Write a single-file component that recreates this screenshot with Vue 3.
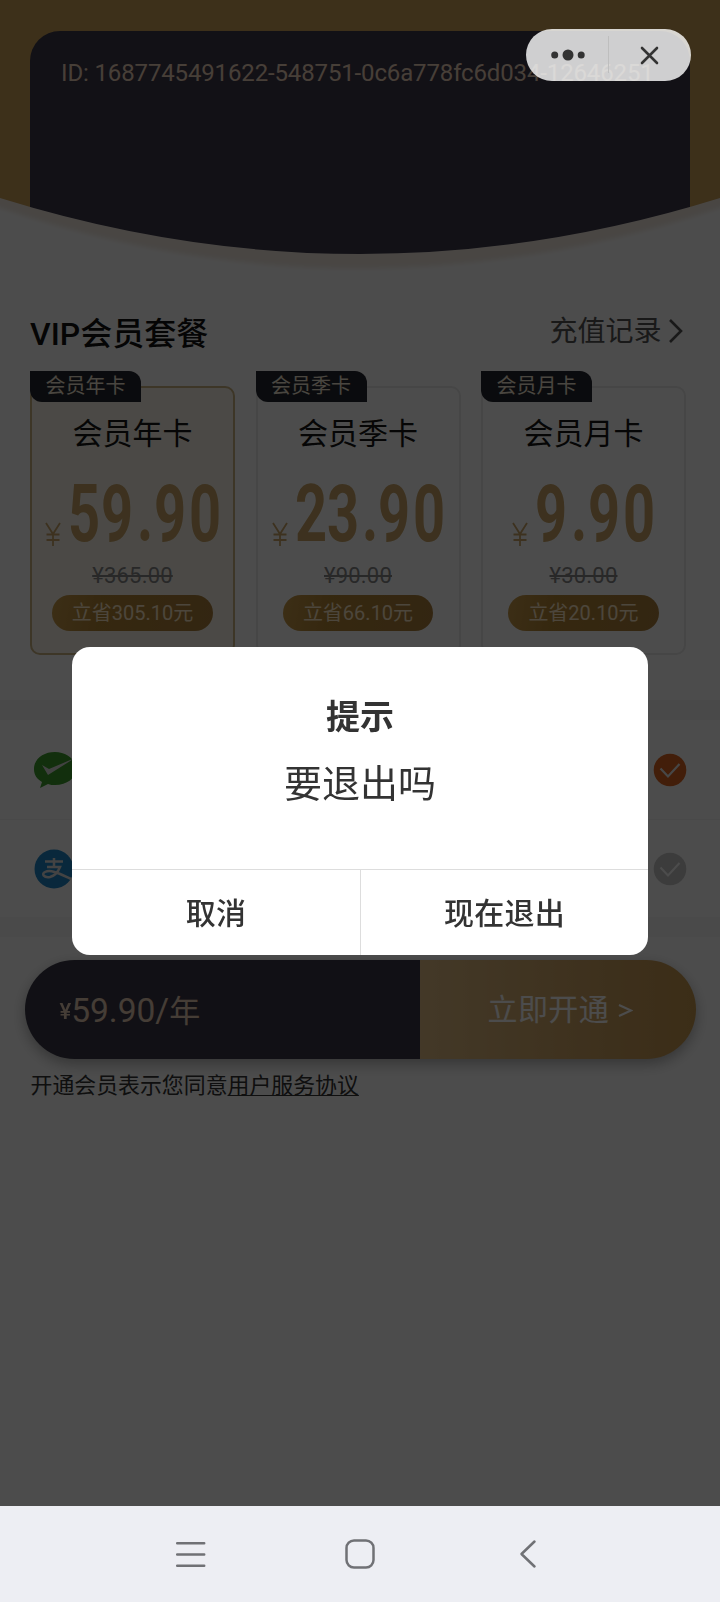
<script setup>
const plans = [
  { name: '会员年卡', price: '59.90', w: 149, x: [0, 33, 69, 86, 121], old: '¥365.00', save: '立省305.10元', active: true },
  { name: '会员季卡', price: '23.90', w: 147, x: [0, 32, 67, 83, 118], old: '¥90.00', save: '立省66.10元' },
  { name: '会员月卡', price: '9.90', w: 117, x: [0, 36, 53, 88], old: '¥30.00', save: '立省20.10元' }
]
const squeeze = 0.7
const glyphX = p => p.x.map(v => ((v - 3) / squeeze).toFixed(1)).join(' ')
</script>

<template>
  <div class="phone">
    <main class="page">
      <header class="hero">
        <div class="member"><span class="uid">ID: 1687745491622-548751-0c6a778fc6d034-12646251</span></div>
        <svg class="curve" width="720" height="90" viewBox="0 0 720 90">
          <defs>
            <filter id="soft" x="-5%" y="-20%" width="110%" height="140%"><feGaussianBlur stdDeviation="2" /></filter>
          </defs>
          <path d="M0 8Q360 120 720 8V90H0Z" fill="#f4ebe2" />
          <path d="M-20 11Q360 146 740 11V110H-20Z" fill="#fff" filter="url(#soft)" />
        </svg>
      </header>

      <section class="plans">
        <div class="head">
          <h2>VIP会员套餐</h2>
          <a class="record">充值记录<svg width="16" height="26" viewBox="0 0 16 26"><path d="M2 1l11 11L2 23" fill="none" stroke="#555" stroke-width="2.6" /></svg></a>
        </div>
        <div class="cards">
          <article v-for="p in plans" :key="p.name" class="card" :class="{ active: p.active }">
            <span class="tag">{{ p.name }}</span>
            <h3>{{ p.name }}</h3>
            <div class="price">
              <svg class="yen" width="16" height="24" viewBox="0 0 16 24"><path d="M1 1l7 11 7-11M8 12v12M1.500 12.500h13M1.500 18h13" fill="none" stroke="#cba668" stroke-width="1.8" /></svg>
              <svg class="num" :width="p.w" height="60" :viewBox="`0 0 ${p.w} 60`">
                <text :x="glyphX(p)" y="58" :transform="`scale(${squeeze} 1)`">{{ p.price }}</text>
              </svg>
            </div>
            <del>{{ p.old }}</del>
            <span class="save">{{ p.save }}</span>
          </article>
        </div>
      </section>

      <section class="pay">
        <div class="row">
          <svg width="48" height="40" viewBox="0 0 48 40">
            <path d="M22 2C10 2 1 9 1 19c0 6 3 10 8 13l-2 6 8-4c2 1 5 1 7 1 12 0 21-7 21-16S34 2 22 2Z" fill="#3c9d2c" />
            <path d="M9 15l7 4L42 8 15 25Z" fill="#ddd" />
          </svg>
          <svg width="34" height="34" viewBox="0 0 34 34"><circle cx="17" cy="17" r="16.300" fill="#dd6422" /><path d="M7.500 15.500l7.500 8L26.500 11" fill="none" stroke="#eee" stroke-width="2.2" /></svg>
        </div>
        <div class="row">
          <svg width="42" height="40" viewBox="0 0 42 40">
            <circle cx="21" cy="20" r="19.500" fill="#2088c8" />
            <path d="M12 12.500h18M21 9v9M14 18h13c-2 5-6 9-10 10-6 1-9-3-5-5 6-3 15 2 26 7" fill="none" stroke="#e0e0e0" stroke-width="2.500" />
          </svg>
          <svg width="34" height="34" viewBox="0 0 34 34"><circle cx="17" cy="17" r="16.300" fill="#cacaca" /><path d="M7.500 15.500l7.500 8L26.500 11" fill="none" stroke="#fff" stroke-width="2" /></svg>
        </div>
      </section>

      <section class="checkout">
        <div class="bar">
          <div class="sum"><small>¥</small>59.90/<span class="unit">年</span></div>
          <div class="open">立即开通<svg width="15" height="18" viewBox="0 0 15 18"><path d="M1 4l12 5.500L1 15" fill="none" stroke="#fff" stroke-width="2.200" /></svg></div>
        </div>
        <p>开通会员表示您同意<u>用户服务协议</u></p>
      </section>

      <div class="mask">
        <div class="dialog">
          <div class="body"><strong>提示</strong><span>要退出吗</span></div>
          <div class="actions"><button>取消</button><button>现在退出</button></div>
        </div>
      </div>

      <div class="capsule">
        <svg width="165" height="52" viewBox="0 0 165 52">
          <g fill="#333"><circle cx="28.700" cy="26" r="3.500" /><circle cx="42" cy="26" r="5.500" /><circle cx="55.200" cy="26" r="3.500" /></g>
          <path d="M82.500 7v37" stroke="#bebebe" stroke-width="1" />
          <path d="M116 19l15 15M131 19L116 34" stroke="#333" stroke-width="2.600" stroke-linecap="round" />
        </svg>
      </div>
    </main>

    <nav class="nav">
      <svg width="384" height="40" viewBox="0 0 384 40" fill="none" stroke="#707175" stroke-width="2.500" stroke-linecap="round">
        <path d="M9.200 9.200h27M9.200 20.500h27M9.200 31.800h27" />
        <rect x="178.500" y="6.500" width="27" height="27" rx="7.500" />
        <path d="M366.500 7.500L353.500 20l13 12.500" stroke-linejoin="round" />
      </svg>
    </nav>
  </div>
</template>

<style>
html, body { margin: 0; background: #edeef3; }
</style>

<style scoped>
.phone { width: 720px; height: 1602px; display: flex; flex-direction: column; overflow: hidden; font-family: Roboto, "Noto Sans CJK SC", sans-serif; }
.page { position: relative; height: 1506px; background: #fff; overflow: hidden; }
.hero { height: 280px; box-sizing: border-box; padding: 31px 30px 0; background: #cba058; display: grid; grid-template-columns: minmax(0, 1fr); }
.member, .curve { grid-area: 1 / 1; }
.member { background: #3c394a; border-radius: 30px 30px 0 0; padding: 27px 31px; }
.uid { display: block; white-space: nowrap; font-size: 24px; line-height: 30px; color: #edd2bb; letter-spacing: -.14px; }
.curve { align-self: end; margin-left: -30px; }
.plans { height: 420px; box-sizing: border-box; padding: 32px 34.500px 0 30px; }
.head { display: flex; justify-content: space-between; height: 45px; }
h2 { margin: 0; font-size: 32px; font-weight: 500; line-height: 44px; color: #111; }
.record { display: flex; align-items: center; gap: 6px; height: 39px; margin-right: 2px; font-size: 28px; line-height: 39px; color: #555; }
.cards { display: grid; grid-template-columns: repeat(3, 205px); column-gap: 20.500px; margin-top: 29px; }
.card { box-sizing: border-box; position: relative; height: 269px; border: 2px solid #eaeaea; border-radius: 10px; display: flex; flex-direction: column; align-items: center; }
.card.active { border-color: #cdb482; background: #faf6ec; }
.tag { position: absolute; left: -2px; top: -17px; width: 111px; height: 31px; box-sizing: border-box; border-radius: 0 12px 0 12px; background: #24262f; color: #f5ead8; font-size: 20px; line-height: 31px; text-align: center; }
h3 { margin: 26px 0 0; font-size: 30px; font-weight: 400; line-height: 40px; color: #161616; }
.price { display: flex; align-items: flex-end; gap: 10px; height: 60px; margin-top: 29px; }
.yen { margin-bottom: -3px; }
.num { overflow: visible; }
.num text { font: 700 80px Roboto, sans-serif; fill: #cba668; }
del { margin-top: 20px; font-size: 22px; line-height: 26px; color: #888; letter-spacing: .2px; }
.save { margin-top: 6px; height: 36px; padding: 0 20px; border-radius: 18px; font-size: 20px; line-height: 37px; color: #ffe9c8; background: linear-gradient(100deg, #c99b4a, #b38535 30%, #aa7e3c); }
.pay { height: 197px; border-top: 20px solid #f5f5f5; border-bottom: 20px solid #f7f7f7; display: grid; grid-template-rows: 100px 97px; }
.row { display: flex; align-items: center; justify-content: space-between; padding: 0 33px; border-bottom: 1px solid #f5f5f5; }
.row:last-child { border: 0; }
.checkout { padding: 23px 24.500px 0; }
.bar { display: flex; height: 99px; border-radius: 50px; overflow: hidden; filter: drop-shadow(0 5px 7px rgba(0,0,0,.3)); }
.sum { flex: none; box-sizing: border-box; width: 395px; padding-left: 35px; background: #3a3846; color: #e6cbb4; font-size: 33.500px; line-height: 102px; white-space: nowrap; }
.sum small { position: relative; top: -3px; font-size: 22px; line-height: 1; font-weight: 500; }
.unit { font-size: 31px; }
.open { flex: 1; display: flex; align-items: center; gap: 9px; padding-left: 68px; color: #fff; font-size: 30px; line-height: 102px; letter-spacing: .4px; background: linear-gradient(90deg, #e0bd85, #cc9f5c 75%, #c7984e); }
.checkout p { margin: 11px 0 0 6px; font-size: 21.900px; line-height: 32px; color: #333; }
u { text-underline-offset: 2px; text-decoration-thickness: 1px; }
.mask { position: absolute; inset: 0; background: rgba(0,0,0,.7); display: flex; justify-content: center; align-items: flex-start; padding-top: 647px; }
.dialog { width: 576px; height: 307.500px; border-radius: 18px; background: #fff; overflow: hidden; color: #333; display: flex; flex-direction: column; }
.body { flex: 1; display: flex; flex-direction: column; align-items: center; }
.body strong { margin-top: 45px; font-size: 34px; line-height: 50px; }
.body span { margin-top: 14px; font-size: 38px; line-height: 56px; }
.actions { display: grid; grid-template-columns: 1fr 1fr; height: 85px; border-top: 1px solid #ddd; }
button { border: 0; padding: 3px 0 0; background: transparent; color: #333; font: 500 30px/82px Roboto, "Noto Sans CJK SC", sans-serif; letter-spacing: .3px; }
button + button { border-left: 1px solid #ddd; }
.capsule { position: absolute; top: 29px; left: 526px; width: 165px; height: 52px; border-radius: 26px; background: rgba(255,255,255,.8); }
.capsule svg { display: block; }
.nav { height: 96px; background: #edeef3; display: flex; align-items: center; justify-content: center; }
</style>
